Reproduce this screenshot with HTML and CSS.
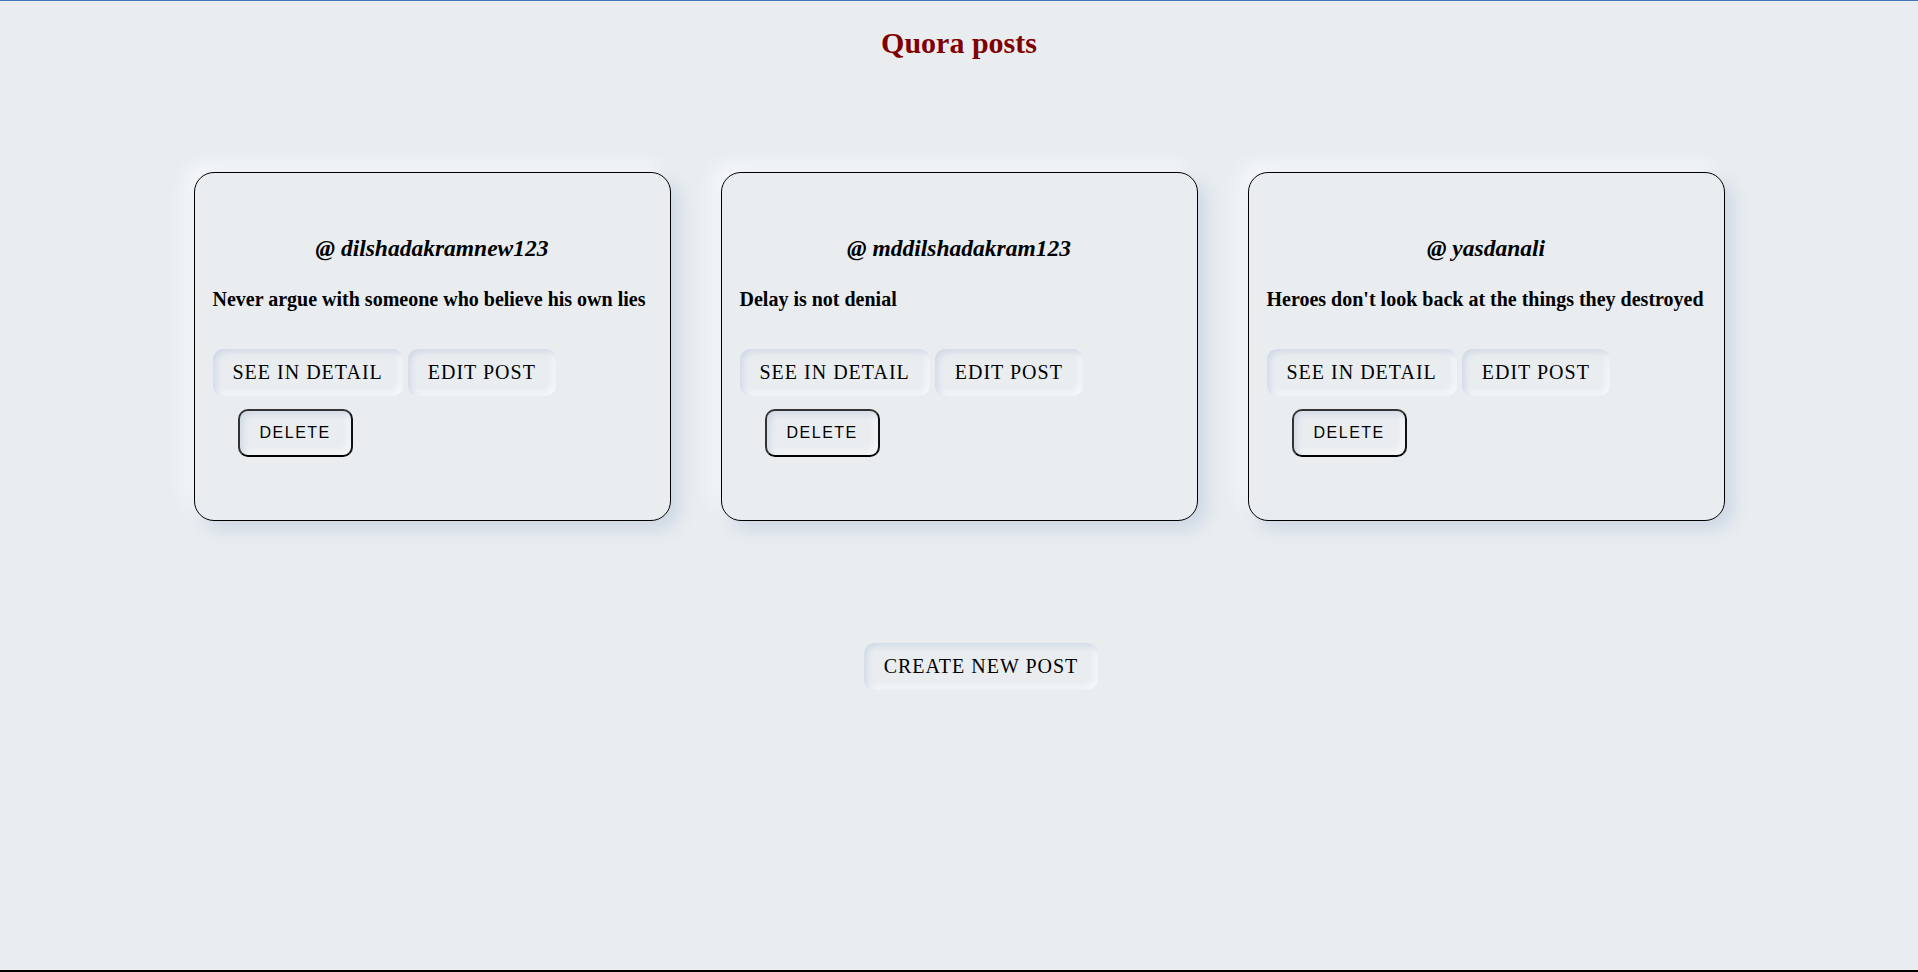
FILE: index.html
```html
<!DOCTYPE html>
<html lang="en">
<head>
<meta charset="utf-8">
<title>Quora posts</title>
<link rel="stylesheet" href="styles.css">
</head>
<body>
<div class="page">
  <h1 class="title">Quora posts</h1>
  <div class="posts">
    <div class="card">
      <h3 class="username">@ dilshadakramnew123</h3>
      <p class="content">Never argue with someone who believe his own lies</p>
      <div class="actions">
        <button class="soft-btn">SEE IN DETAIL</button>
        <button class="soft-btn">EDIT POST</button>
      </div>
      <form class="delete-form"><button type="button" class="delete-btn">DELETE</button></form>
    </div>
    <div class="card">
      <h3 class="username">@ mddilshadakram123</h3>
      <p class="content">Delay is not denial</p>
      <div class="actions">
        <button class="soft-btn">SEE IN DETAIL</button>
        <button class="soft-btn">EDIT POST</button>
      </div>
      <form class="delete-form"><button type="button" class="delete-btn">DELETE</button></form>
    </div>
    <div class="card">
      <h3 class="username">@ yasdanali</h3>
      <p class="content">Heroes don't look back at the things they destroyed</p>
      <div class="actions">
        <button class="soft-btn">SEE IN DETAIL</button>
        <button class="soft-btn">EDIT POST</button>
      </div>
      <form class="delete-form"><button type="button" class="delete-btn">DELETE</button></form>
    </div>
  </div>
  <div class="create-row">
    <button class="soft-btn create-btn">CREATE NEW POST</button>
  </div>
</div>
</body>
</html>
```
FILE: styles.css
```css
html, body {
  margin: 0;
  padding: 0;
  background: #e9edf0;
}

.page {
  box-sizing: border-box;
  min-height: 972px;
  border-top: 1px solid #4577b8;
  border-bottom: 2px solid #000;
  font-family: "Liberation Serif", "Times New Roman", serif;
  color: #000;
}

.title {
  margin: 0;
  padding-top: 24px;
  font-size: 30px;
  line-height: 36px;
  font-weight: bold;
  color: #800000;
  text-align: center;
}

.posts {
  display: flex;
  justify-content: center;
  gap: 50px;
  margin-top: 111px;
}

.card {
  box-sizing: border-box;
  width: 477px;
  height: 349px;
  padding: 18px;
  border: 1px solid #000;
  border-radius: 20px;
  background: #e9edf0;
  box-shadow: 8px 8px 18px #ccd6e3, -8px -8px 18px #f7f9fb;
}

.username {
  margin: 44px 0 0;
  font-size: 23.5px;
  line-height: 26px;
  font-weight: bold;
  font-style: italic;
  text-align: center;
}

.content {
  margin: 27px 0 0;
  font-size: 20px;
  line-height: 23px;
  font-weight: bold;
}

.actions {
  display: flex;
  gap: 5px;
  margin-top: 38px;
}

.soft-btn {
  box-sizing: border-box;
  height: 47px;
  padding: 0 20px;
  border: none;
  border-radius: 10px;
  background: #e9edf0;
  font-family: "Liberation Serif", "Times New Roman", serif;
  font-size: 20px;
  letter-spacing: 1px;
  color: #000;
  box-shadow: inset 3px 3px 6px #d0d9e6, inset -3px -3px 6px #f8fafc;
}

.delete-form {
  margin: 13px 0 0 25px;
}

.delete-btn {
  box-sizing: border-box;
  height: 48px;
  padding: 0 20px;
  border: 2px solid #333;
  border-bottom-color: #000;
  border-right-color: #111;
  border-radius: 10px;
  background: #e9edf0;
  font-family: "Liberation Sans", Arial, sans-serif;
  font-size: 16px;
  letter-spacing: 1.5px;
  color: #000;
  box-shadow: inset 3px 3px 6px #d0d9e6, inset -3px -3px 6px #f8fafc;
}

.create-row {
  display: flex;
  justify-content: center;
  margin-top: 122px;
  padding-left: 44px;
}
```
